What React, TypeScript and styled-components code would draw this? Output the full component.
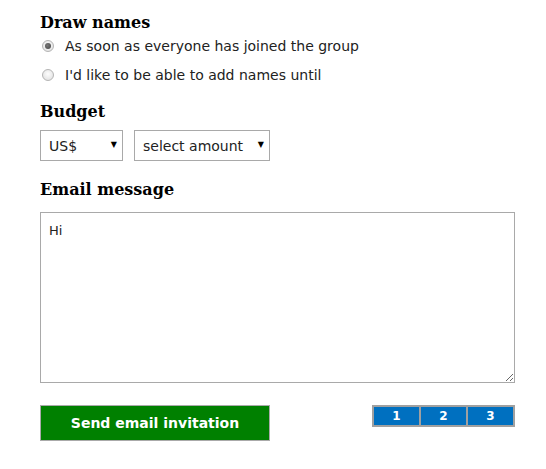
import styled, { createGlobalStyle } from 'styled-components';

const GlobalStyle = createGlobalStyle`
  body {
    margin: 0;
    background: #fff;
    font-family: "DejaVu Sans", Verdana, sans-serif;
    font-size: 14px;
    color: #222;
  }
`;

const Page = styled.div`
  width: 475px;
  padding: 12px 0 0 40px;
`;

const Heading = styled.h2`
  margin: 0;
  font-family: "DejaVu Serif", Georgia, serif;
  font-size: 16px;
  font-weight: bold;
  line-height: 22px;
  color: #000;
`;

const Section = styled.section<{ $gap?: number }>`
  margin-bottom: ${(p) => p.$gap ?? 0}px;
`;

const RadioList = styled.div`
  display: flex;
  flex-direction: column;
  gap: 9px;
  padding-top: 2px;
`;

const RadioRow = styled.label`
  display: flex;
  align-items: center;
  height: 20px;
  gap: 11px;
  padding-left: 2px;
  cursor: pointer;
`;

const Radio = styled.input`
  appearance: none;
  margin: 0;
  width: 12px;
  height: 12px;
  border-radius: 50%;
  border: 1px solid #b4b4b4;
  background: radial-gradient(circle at 50% 40%, #fdfdfd, #dcdcdc);
  display: grid;
  place-items: center;
  &:checked::after {
    content: '';
    width: 6px;
    height: 6px;
    border-radius: 50%;
    background: radial-gradient(circle at 40% 40%, #777, #444);
  }
`;

const SelectRow = styled.div`
  display: flex;
  gap: 11px;
  padding: 7px 0 0;
`;

const SelectWrap = styled.div<{ $width: number }>`
  position: relative;
  width: ${(p) => p.$width}px;
`;

const Select = styled.select`
  appearance: none;
  width: 100%;
  height: 31px;
  margin: 0;
  padding: 0 0 0 8px;
  border: 1px solid #a9a9a9;
  border-radius: 0;
  background: #fff;
  font-family: "DejaVu Sans", Verdana, sans-serif;
  font-size: 14px;
  color: #222;
`;

const Arrow = styled.span`
  position: absolute;
  right: 6px;
  top: 10px;
  font-size: 8px;
  color: #000;
  pointer-events: none;
`;

const Message = styled.textarea`
  display: block;
  box-sizing: border-box;
  width: 475px;
  height: 171px;
  margin: 11px 0 0;
  padding: 10px 8px;
  border: 1px solid #a9a9a9;
  border-radius: 0;
  font-family: "DejaVu Sans", Verdana, sans-serif;
  font-size: 13px;
  color: #222;
  resize: both;
  outline: none;
`;

const Footer = styled.div`
  display: flex;
  justify-content: space-between;
  align-items: flex-start;
  margin-top: 22px;
`;

const SendButton = styled.button`
  width: 230px;
  height: 36px;
  border: 1px solid #aaa;
  background: #008000;
  color: #fff;
  font-family: "DejaVu Sans", Verdana, sans-serif;
  font-size: 14px;
  font-weight: bold;
  cursor: pointer;
`;

const Steps = styled.div`
  display: grid;
  grid-template-columns: repeat(3, 45px);
  gap: 2px;
  padding: 2px;
  background: #a0a0a0;
`;

const Step = styled.div`
  height: 18px;
  line-height: 18px;
  text-align: center;
  background: #0070c0;
  color: #fff;
  font-size: 12px;
  font-weight: bold;
`;

export default function App() {
  return (
    <Page>
      <GlobalStyle />
      <Section $gap={16}>
        <Heading>Draw names</Heading>
        <RadioList>
          <RadioRow>
            <Radio type="radio" name="draw" defaultChecked />
            As soon as everyone has joined the group
          </RadioRow>
          <RadioRow>
            <Radio type="radio" name="draw" />
            I'd like to be able to add names until
          </RadioRow>
        </RadioList>
      </Section>
      <Section $gap={18}>
        <Heading>Budget</Heading>
        <SelectRow>
          <SelectWrap $width={83}>
            <Select defaultValue="usd">
              <option value="usd">US$</option>
            </Select>
            <Arrow>▼</Arrow>
          </SelectWrap>
          <SelectWrap $width={136}>
            <Select defaultValue="">
              <option value="">select amount</option>
            </Select>
            <Arrow>▼</Arrow>
          </SelectWrap>
        </SelectRow>
      </Section>
      <Section>
        <Heading>Email message</Heading>
        <Message defaultValue="Hi" />
      </Section>
      <Footer>
        <SendButton>Send email invitation</SendButton>
        <Steps>
          <Step>1</Step>
          <Step>2</Step>
          <Step>3</Step>
        </Steps>
      </Footer>
    </Page>
  );
}
